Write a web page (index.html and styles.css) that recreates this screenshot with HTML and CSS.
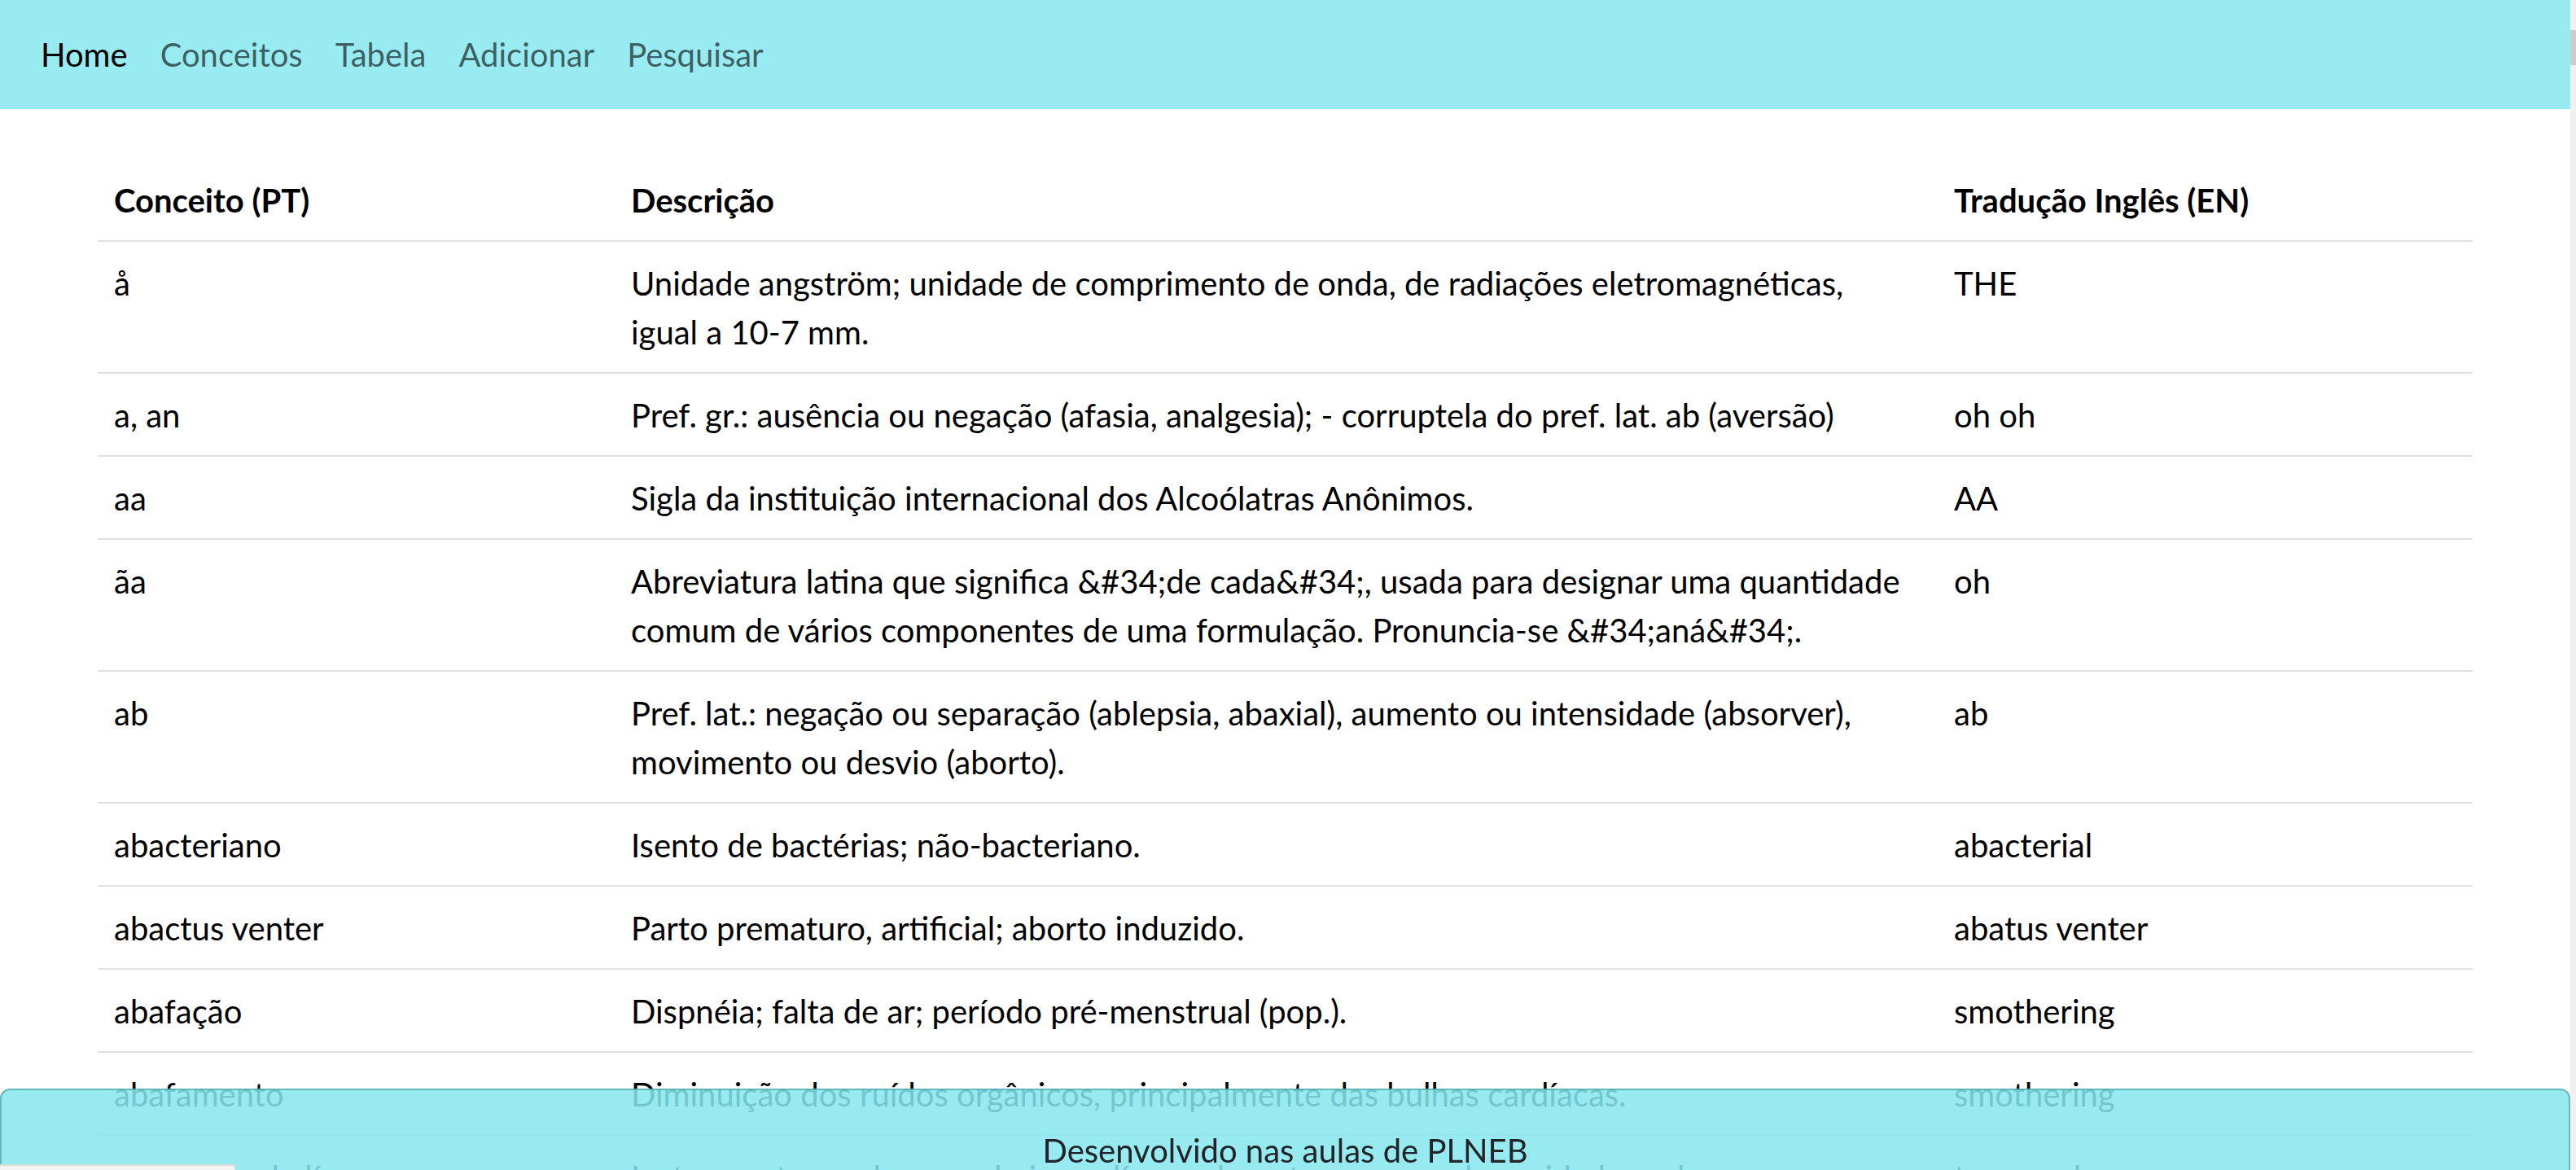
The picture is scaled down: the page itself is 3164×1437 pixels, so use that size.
FILE: index.html
```html
<!DOCTYPE html>
<html lang="pt">
<head>
<meta charset="utf-8">
<title>Conceitos</title>
<link rel="stylesheet" href="styles.css">
</head>
<body>
<nav class="navbar">
  <a class="nav-link active" href="#">Home</a>
  <a class="nav-link" href="#">Conceitos</a>
  <a class="nav-link" href="#">Tabela</a>
  <a class="nav-link" href="#">Adicionar</a>
  <a class="nav-link" href="#">Pesquisar</a>
</nav>
<main class="content">
  <table class="concepts">
    <colgroup>
      <col class="col-pt">
      <col class="col-desc">
      <col class="col-en">
    </colgroup>
    <thead>
      <tr><th>Conceito (PT)</th><th class="desc">Descrição</th><th>Tradução Inglês (EN)</th></tr>
    </thead>
    <tbody>
      <tr><td>å</td><td class="desc">Unidade angström; unidade de comprimento de onda, de radiações eletromagnéticas, igual a 10-7 mm.</td><td>THE</td></tr>
      <tr><td>a, an</td><td class="desc">Pref. gr.: ausência ou negação (afasia, analgesia); - corruptela do pref. lat. ab (aversão)</td><td>oh oh</td></tr>
      <tr><td>aa</td><td class="desc">Sigla da instituição internacional dos Alcoólatras Anônimos.</td><td>AA</td></tr>
      <tr><td>ãa</td><td class="desc">Abreviatura latina que significa &amp;#34;de cada&amp;#34;, usada para designar uma quantidade comum de vários componentes de uma formulação. Pronuncia-se &amp;#34;aná&amp;#34;.</td><td>oh</td></tr>
      <tr><td>ab</td><td class="desc">Pref. lat.: negação ou separação (ablepsia, abaxial), aumento ou intensidade (absorver), movimento ou desvio (aborto).</td><td>ab</td></tr>
      <tr><td>abacteriano</td><td class="desc">Isento de bactérias; não-bacteriano.</td><td>abacterial</td></tr>
      <tr><td>abactus venter</td><td class="desc">Parto prematuro, artificial; aborto induzido.</td><td>abatus venter</td></tr>
      <tr><td>abafação</td><td class="desc">Dispnéia; falta de ar; período pré-menstrual (pop.).</td><td>smothering</td></tr>
      <tr><td>abafamento</td><td class="desc">Diminuição dos ruídos orgânicos, principalmente das bulhas cardíacas.</td><td>smothering</td></tr>
      <tr><td>abaixador de língua</td><td class="desc">Instrumento usado para abaixar a língua durante o exame da cavidade oral.</td><td>tongue depressor</td></tr>
    </tbody>
  </table>
</main>
<footer class="footer">Desenvolvido nas aulas de PLNEB</footer>
<div class="status-box"></div>
<div class="scrollbar"><div class="scrollbar-thumb"></div></div>
</body>
</html>
```

FILE: styles.css
```css
html {
  overflow: hidden;
}
body {
  margin: 0 7px 0 0;
  font-family: Lato, "Noto Sans", sans-serif;
  font-size: 40px;
  line-height: 60px;
  color: #212529;
  background: #fff;
}
.navbar {
  height: 134px;
  background: #98ebf1;
  display: flex;
  align-items: center;
  padding: 0 30px;
  box-sizing: border-box;
}
.nav-link {
  padding: 0 20px;
  text-decoration: none;
  color: rgba(0, 0, 0, 0.6);
}
.nav-link.active {
  color: #000;
}
.content {
  padding: 61px 120px 0;
}
.concepts {
  width: 100%;
  border-collapse: collapse;
  table-layout: fixed;
}
.col-pt { width: 635px; }
.col-desc { width: 1625px; }
.col-en { width: 657px; }
.concepts th,
.concepts td {
  text-align: left;
  vertical-align: top;
  padding: 21px 20px 19px;
  border-bottom: 2px solid #dee2e6;
}
.concepts .desc {
  padding-right: 30px;
}
.concepts th {
  font-weight: 700;
  color: #000;
}
.concepts td {
  color: #000;
}
.footer {
  position: fixed;
  left: 0;
  right: 7px;
  bottom: 0;
  height: 100px;
  box-sizing: border-box;
  padding-top: 44px;
  text-align: center;
  color: #212529;
  background: rgba(134, 231, 238, 0.86);
  border: 2px solid rgba(60, 140, 150, 0.55);
  border-bottom: none;
  border-radius: 12px 12px 0 0;
}
.status-box {
  position: fixed;
  left: 0;
  bottom: 0;
  width: 289px;
  height: 7px;
  box-sizing: border-box;
  background: #f4f4f4;
  border-top: 2px solid #dcdcdc;
  border-right: 1px solid #dcdcdc;
}
.scrollbar {
  position: fixed;
  top: 0;
  right: 0;
  width: 7px;
  height: 100%;
  background: #f0f0f0;
}
.scrollbar-thumb {
  margin-top: 37px;
  height: 43px;
  background: #cdcdcd;
}
```
